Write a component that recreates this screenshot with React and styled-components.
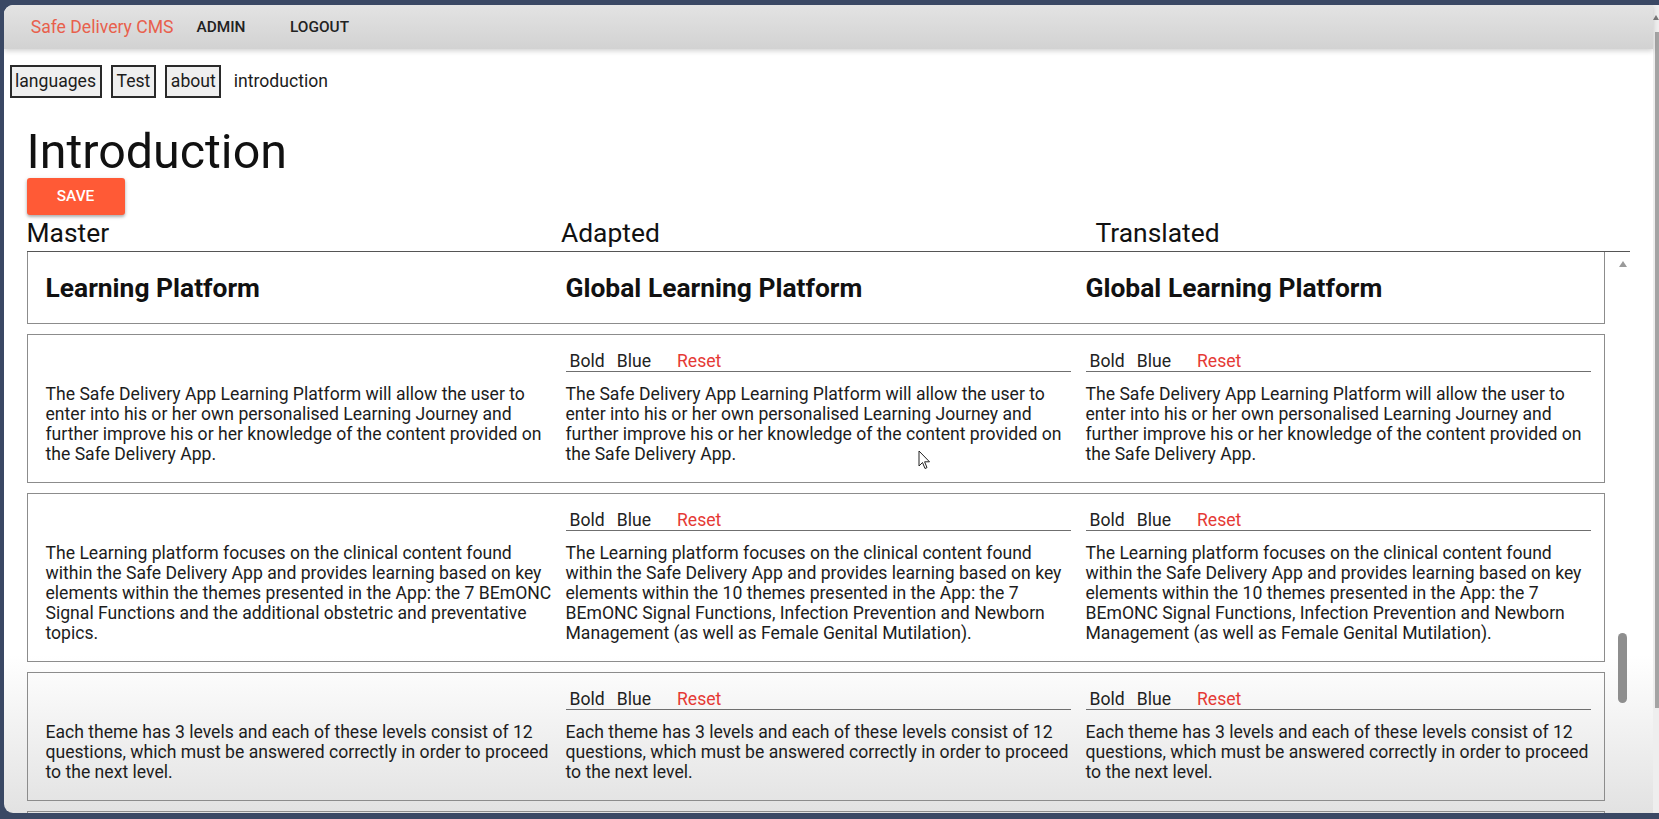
import styled, { createGlobalStyle } from "styled-components";

const GlobalStyle = createGlobalStyle`
  html, body {
    margin: 0;
    padding: 0;
  }
  body {
    background: #3a4864;
    font-family: Roboto, "Liberation Sans", sans-serif;
    color: #1c1c1c;
    overflow: hidden;
  }
`;

const Frame = styled.div`
  height: 819px;
  box-sizing: border-box;
  padding: 5px 0 0 4px;
`;

const Window = styled.div`
  position: relative;
  height: 808px;
  display: flex;
  overflow: hidden;
  border-radius: 9px 0 0 9px;
  background: linear-gradient(to bottom, #fff 0, #fff 650px, #e2e2e2 808px);
`;

const Viewport = styled.div`
  flex: 1;
  min-width: 0;
  display: flex;
  flex-direction: column;
`;

const PageScroll = styled.div`
  width: 6px;
  background: #eeeeee;
  display: flex;
  flex-direction: column;
  align-items: flex-end;
`;

const PageArrow = styled.div`
  margin-top: 10px;
  width: 0;
  height: 0;
  border-left: 3px solid transparent;
  border-right: 3px solid transparent;
  border-bottom: 5px solid #7a7a7a;
`;

const PageThumb = styled.div`
  margin-top: 12px;
  width: 4px;
  height: 676px;
  background: #a4a4a4;
`;

const TopBar = styled.header`
  position: relative;
  z-index: 1;
  flex-shrink: 0;
  height: 44px;
  display: flex;
  align-items: center;
  padding-left: 26.7px;
  background: linear-gradient(#e3e3e3, #d2d2d2);
  box-shadow: 0 2px 5px rgba(0, 0, 0, 0.18);
`;

const Brand = styled.a`
  color: #e8604c;
  font-size: 17.6px;
  text-decoration: none;
  margin-right: 23px;
`;

const NavLink = styled.a`
  color: #222;
  font-size: 15.4px;
  font-weight: 500;
  text-decoration: none;
  margin-right: 44.5px;
`;

const Crumbs = styled.nav`
  display: flex;
  align-items: center;
  gap: 9.5px;
  padding: 16px 0 0 5.5px;
`;

const CrumbButton = styled.button`
  font-family: inherit;
  font-size: 17.6px;
  line-height: 20.6px;
  color: #1c1c1c;
  background: #efefef;
  border: 2px solid #2a2a2a;
  border-radius: 0;
  padding: 4px 3.5px;
`;

const CrumbCurrent = styled.span`
  font-size: 17.6px;
  margin-left: 3px;
`;

const Content = styled.main`
  flex: 1;
  min-height: 0;
  display: flex;
  flex-direction: column;
  padding: 0 23px 0 22.5px;
`;

const Title = styled.h1`
  margin: 28px 0 0;
  font-size: 48.4px;
  font-weight: 400;
  line-height: 52px;
  color: #111;
`;

const SaveButton = styled.button`
  align-self: flex-start;
  width: 98px;
  height: 37px;
  border: 0;
  border-radius: 3px;
  background: #ff5a36;
  color: #fff;
  font-family: inherit;
  font-size: 15.4px;
  font-weight: 500;
  box-shadow: 0 2px 3px rgba(0, 0, 0, 0.25), 0 1px 5px rgba(0, 0, 0, 0.12);
`;

const ColumnHeads = styled.div`
  margin-top: 3px;
  display: grid;
  grid-template-columns: repeat(3, 1fr);
  font-size: 26.4px;
  line-height: 31px;
  padding-bottom: 2px;
  border-bottom: 1px solid #555;
  color: #111;
`;

const ScrollArea = styled.div`
  flex: 1;
  min-height: 0;
  display: flex;
`;

const CardList = styled.div`
  flex: 1;
  min-width: 0;
`;

const Card = styled.section`
  display: grid;
  grid-template-columns: repeat(3, 520px);
  align-items: end;
  min-height: ${(p) => (p.$empty ? "60px" : "0")};
  border: 1px solid #8c8c8c;
  padding: 16px 0 18px 18px;
  margin-top: 10px;

  &:first-child {
    border-top: 0;
    margin-top: 0;
    padding: 21px 0 19px 18px;
  }
`;

const CardTitle = styled.h2`
  margin: 0;
  font-size: 26.4px;
  font-weight: 700;
  line-height: 31px;
  color: #111;
`;

const Editor = styled.div`
  display: flex;
  flex-direction: column;
  width: 505px;
`;

const Toolbar = styled.div`
  display: flex;
  border-bottom: 1px solid #6f6f6f;
  margin-bottom: 11.5px;
`;

const ToolButton = styled.button`
  font-family: inherit;
  font-size: 17.6px;
  line-height: 20.6px;
  padding: 0 4px;
  margin: 0 4px 0 ${(p) => (p.$spaced ? "14px" : "0")};
  border: 0;
  background: none;
  color: ${(p) => (p.$danger ? "#e53935" : "#222")};
`;

const Text = styled.p`
  margin: 0;
  padding-right: ${(p) => (p.$master ? "6px" : "0")};
  font-size: 17.6px;
  line-height: 20px;
  color: #1c1c1c;
`;

const InnerScrollbar = styled.div`
  width: 25px;
  padding-left: 10px;
  box-sizing: border-box;
  display: flex;
  flex-direction: column;
  align-items: center;
`;

const ArrowUp = styled.div`
  margin-top: 9px;
  width: 0;
  height: 0;
  border-left: 4.5px solid transparent;
  border-right: 4.5px solid transparent;
  border-bottom: 6px solid #9a9a9a;
`;

const Thumb = styled.div`
  margin-top: 366px;
  width: 9px;
  height: 70px;
  border-radius: 5px;
  background: #8e8e8e;
`;

const Cursor = styled.svg`
  position: absolute;
  left: 914px;
  top: 445px;
`;

const rows = [
  {
    master:
      "The Safe Delivery App Learning Platform will allow the user to enter into his or her own personalised Learning Journey and further improve his or her knowledge of the content provided on the Safe Delivery App.",
    adapted:
      "The Safe Delivery App Learning Platform will allow the user to enter into his or her own personalised Learning Journey and further improve his or her knowledge of the content provided on the Safe Delivery App.",
  },
  {
    master:
      "The Learning platform focuses on the clinical content found within the Safe Delivery App and provides learning based on key elements within the themes presented in the App: the 7 BEmONC Signal Functions and the additional obstetric and preventative topics.",
    adapted:
      "The Learning platform focuses on the clinical content found within the Safe Delivery App and provides learning based on key elements within the 10 themes presented in the App: the 7 BEmONC Signal Functions, Infection Prevention and Newborn Management (as well as Female Genital Mutilation).",
  },
  {
    master:
      "Each theme has 3 levels and each of these levels consist of 12 questions, which must be answered correctly in order to proceed to the next level.",
    adapted:
      "Each theme has 3 levels and each of these levels consist of 12 questions, which must be answered correctly in order to proceed to the next level.",
  },
];

const EditorCell = ({ text }) => (
  <Editor>
    <Toolbar>
      <ToolButton>Bold</ToolButton>
      <ToolButton>Blue</ToolButton>
      <ToolButton $danger $spaced>
        Reset
      </ToolButton>
    </Toolbar>
    <Text>{text}</Text>
  </Editor>
);

export default function App() {
  return (
    <>
      <GlobalStyle />
      <Frame>
        <Window>
          <Viewport>
            <TopBar>
              <Brand href="#">Safe Delivery CMS</Brand>
              <NavLink href="#">ADMIN</NavLink>
              <NavLink href="#">LOGOUT</NavLink>
            </TopBar>
            <Crumbs>
              <CrumbButton>languages</CrumbButton>
              <CrumbButton>Test</CrumbButton>
              <CrumbButton>about</CrumbButton>
              <CrumbCurrent>introduction</CrumbCurrent>
            </Crumbs>
            <Content>
              <Title>Introduction</Title>
              <SaveButton>SAVE</SaveButton>
              <ColumnHeads>
                <span>Master</span>
                <span>Adapted</span>
                <span>Translated</span>
              </ColumnHeads>
              <ScrollArea>
                <CardList>
                  <Card>
                    <CardTitle>Learning Platform</CardTitle>
                    <CardTitle>Global Learning Platform</CardTitle>
                    <CardTitle>Global Learning Platform</CardTitle>
                  </Card>
                  {rows.map((row, i) => (
                    <Card key={i}>
                      <Text $master>{row.master}</Text>
                      <EditorCell text={row.adapted} />
                      <EditorCell text={row.adapted} />
                    </Card>
                  ))}
                  <Card $empty />
                </CardList>
                <InnerScrollbar>
                  <ArrowUp />
                  <Thumb />
                </InnerScrollbar>
              </ScrollArea>
            </Content>
          </Viewport>
          <PageScroll>
            <PageArrow />
            <PageThumb />
          </PageScroll>
          <Cursor width="13" height="20" viewBox="0 0 13 20">
            <path
              d="M1 1 L1 16 L4.5 12.5 L7 18.5 L9 17.6 L6.6 11.8 L11.5 11.8 Z"
              fill="#fff"
              stroke="#222"
              strokeWidth="1"
              strokeLinejoin="round"
            />
          </Cursor>
        </Window>
      </Frame>
    </>
  );
}
